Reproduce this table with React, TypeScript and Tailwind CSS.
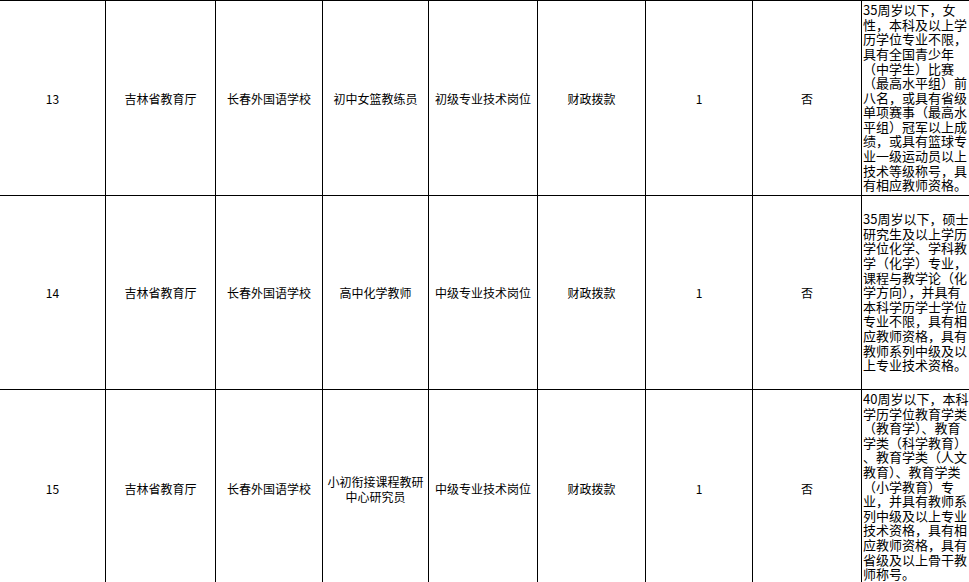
const rows = [
  {
    no: '13',
    job: ['初中女篮教练员'],
    level: '初级专业技术岗位',
    h: 'h-[195px]',
    align: 'justify-center',
    req: [
      '35周岁以下，女',
      '性，本科及以上学',
      '历学位专业不限，',
      '具有全国青少年',
      '（中学生）比赛',
      '（最高水平组）前',
      '八名，或具有省级',
      '单项赛事（最高水',
      '平组）冠军以上成',
      '绩，或具有篮球专',
      '业一级运动员以上',
      '技术等级称号，具',
      '有相应教师资格。',
    ],
  },
  {
    no: '14',
    job: ['高中化学教师'],
    level: '中级专业技术岗位',
    h: 'h-[194px]',
    align: 'justify-center',
    req: [
      '35周岁以下，硕士',
      '研究生及以上学历',
      '学位化学、学科教',
      '学（化学）专业，',
      '课程与教学论（化',
      '学方向），并具有',
      '本科学历学士学位',
      '专业不限，具有相',
      '应教师资格，具有',
      '教师系列中级及以',
      '上专业技术资格。',
    ],
  },
  {
    no: '15',
    job: ['小初衔接课程教研', '中心研究员'],
    level: '中级专业技术岗位',
    h: 'h-[198px]',
    align: 'justify-start pt-[2px]',
    req: [
      '40周岁以下，本科',
      '学历学位教育学类',
      '（教育学）、教育',
      '学类（科学教育）',
      '、教育学类（人文',
      '教育）、教育学类',
      '（小学教育）专',
      '业，并具有教师系',
      '列中级及以上专业',
      '技术资格，具有相',
      '应教师资格，具有',
      '省级及以上骨干教',
      '师称号。',
    ],
  },
]

const cols = 'grid-cols-[106px_110px_107px_106px_109px_108px_107px_109px_1fr]'

function Cell({ children }: { children: React.ReactNode }) {
  return (
    <div className="flex flex-col items-center justify-center border-r border-b border-black text-center text-[12px] leading-[15px]">
      {children}
    </div>
  )
}

export default function App() {
  return (
    <div
      className="w-[969px] h-[582px] overflow-hidden bg-white text-black border-t border-black"
      style={{ fontFamily: '"Noto Sans CJK SC", "Liberation Sans", sans-serif' }}
    >
      {rows.map((r) => (
        <div key={r.no} className={`grid ${cols} ${r.h}`}>
          <Cell>{r.no}</Cell>
          <Cell>吉林省教育厅</Cell>
          <Cell>长春外国语学校</Cell>
          <Cell>
            {r.job.map((j) => (
              <div key={j}>{j}</div>
            ))}
          </Cell>
          <Cell>{r.level}</Cell>
          <Cell>财政拨款</Cell>
          <Cell>1</Cell>
          <Cell>否</Cell>
          <div className={`flex flex-col ${r.align} border-b border-black pl-[1px] text-[13px] leading-[14.6px] whitespace-nowrap overflow-hidden`}>
            {r.req.map((line, i) => (
              <div key={i}>{line}</div>
            ))}
          </div>
        </div>
      ))}
    </div>
  )
}
